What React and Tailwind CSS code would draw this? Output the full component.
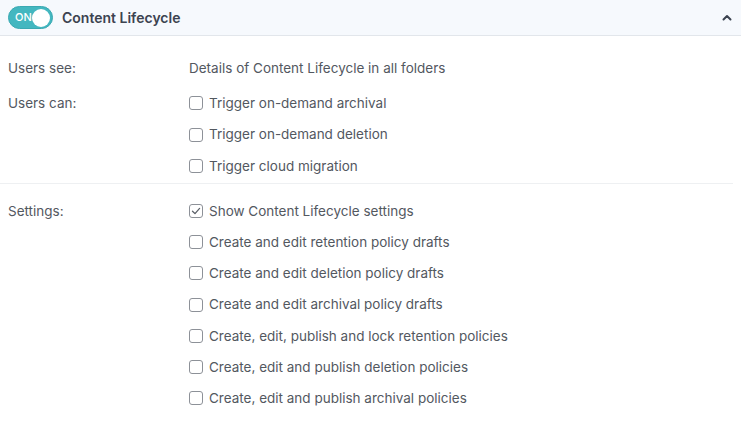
import React from "react";

const canItems = [
  { label: "Trigger on-demand archival", checked: false },
  { label: "Trigger on-demand deletion", checked: false },
  { label: "Trigger cloud migration", checked: false },
];

const settingItems = [
  { label: "Show Content Lifecycle settings", checked: true },
  { label: "Create and edit retention policy drafts", checked: false },
  { label: "Create and edit deletion policy drafts", checked: false },
  { label: "Create and edit archival policy drafts", checked: false },
  { label: "Create, edit, publish and lock retention policies", checked: false },
  { label: "Create, edit and publish deletion policies", checked: false },
  { label: "Create, edit and publish archival policies", checked: false },
];

const Checkbox = ({ checked }) => (
  <span className="flex h-[14px] w-[14px] shrink-0 items-center justify-center rounded-[3px] border border-[#8d9198] bg-white">
    {checked && (
      <svg width="10" height="10" viewBox="0 0 10 10" fill="none">
        <path d="M1.5 5.2 L4 7.6 L8.6 2.4" stroke="#5b6068" strokeWidth="1.3" strokeLinecap="round" strokeLinejoin="round" />
      </svg>
    )}
  </span>
);

const CheckRow = ({ label, checked }) => (
  <label className="flex h-5 items-center gap-[6px]">
    <Checkbox checked={checked} />
    <span>{label}</span>
  </label>
);

export default function App() {
  return (
    <div
      className="h-[432px] w-[741px] bg-white text-[13.5px] text-[#53585f]"
      style={{ fontFamily: "Inter, 'Noto Sans', sans-serif" }}
    >
      {/* header */}
      <div className="flex h-9 items-center border-b border-[#e2e6eb] bg-[#f6f9fd] pl-2 pr-[9px]">
        <div className="flex h-[23px] w-[45px] items-center justify-between rounded-full border border-[#3aa9b2] bg-[#43b7c0] pl-[6px] pr-[2px]">
          <span className="text-[11px] font-medium leading-none text-white">ON</span>
          <span className="h-[18px] w-[18px] rounded-full bg-white" />
        </div>
        <span className="ml-[9px] text-[14px] font-semibold text-[#3c4350]">Content Lifecycle</span>
        <svg className="ml-auto" width="10" height="7" viewBox="0 0 10 7" fill="none">
          <path d="M1.5 5.5 L5 2 L8.5 5.5" stroke="#3c4350" strokeWidth="2" strokeLinecap="round" strokeLinejoin="round" />
        </svg>
      </div>

      {/* users section */}
      <div className="mr-2 border-b border-[#eef0f2] pb-[7px] pl-2 pt-[22px]">
        <div className="grid grid-cols-[181px_1fr]">
          <span className="leading-5">Users see:</span>
          <span className="leading-5">Details of Content Lifecycle in all folders</span>
          <span className="mt-[15px] leading-5">Users can:</span>
          <div className="mt-[15px] flex flex-col gap-[11.5px]">
            {canItems.map((item) => (
              <CheckRow key={item.label} {...item} />
            ))}
          </div>
        </div>
      </div>

      {/* settings section */}
      <div className="pl-2 pt-[17px]">
        <div className="grid grid-cols-[181px_1fr]">
          <span className="leading-5">Settings:</span>
          <div className="flex flex-col gap-[11.2px]">
            {settingItems.map((item) => (
              <CheckRow key={item.label} {...item} />
            ))}
          </div>
        </div>
      </div>
    </div>
  );
}
